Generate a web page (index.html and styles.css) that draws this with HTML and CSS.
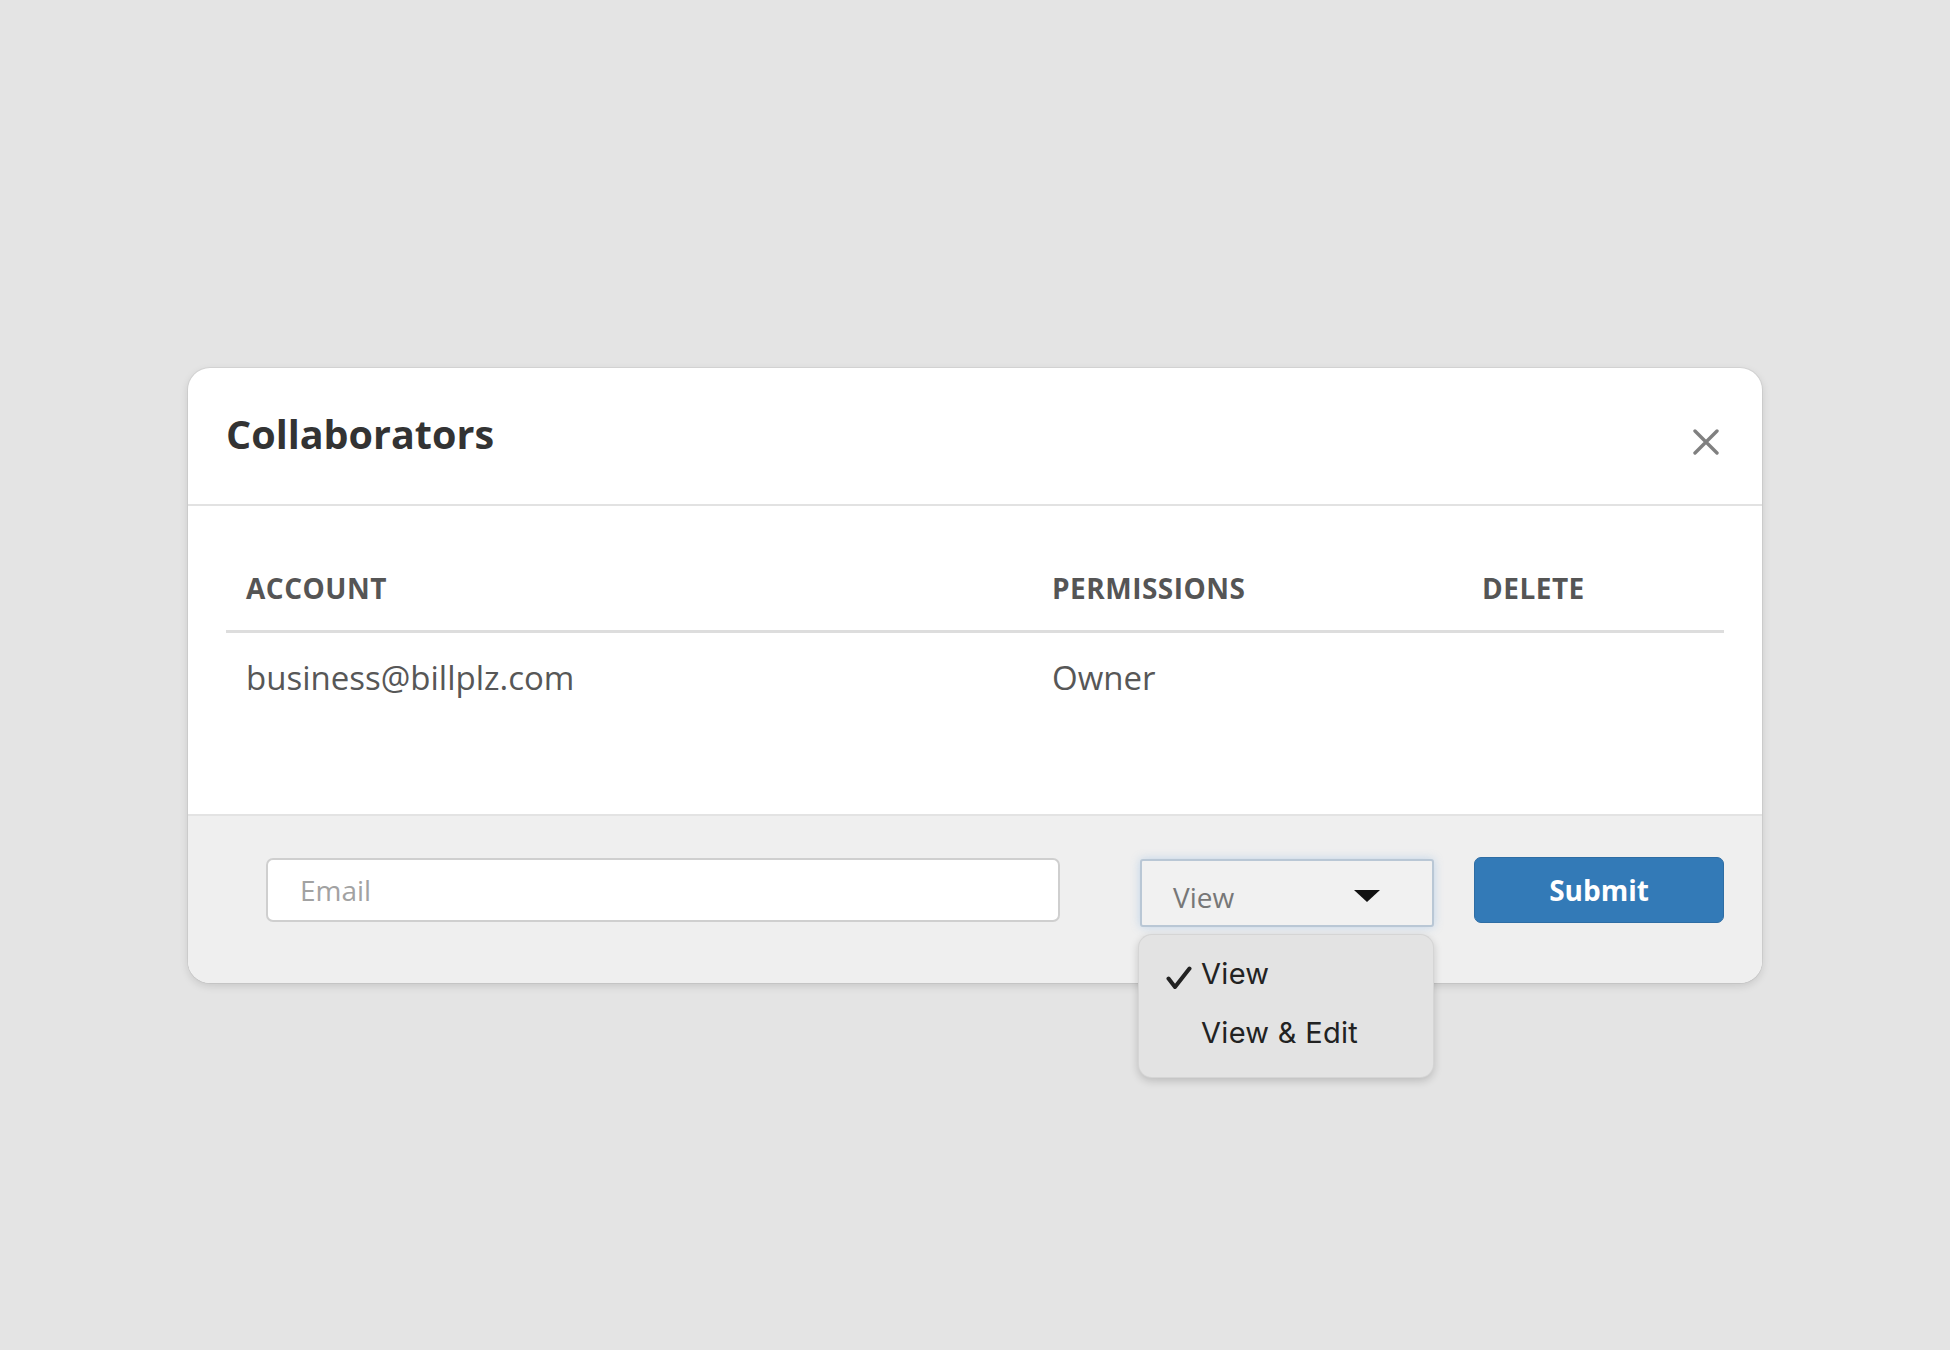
FILE: index.html
```html
<!DOCTYPE html>
<html lang="en">
<head>
<meta charset="utf-8">
<title>Collaborators</title>
<link rel="stylesheet" href="styles.css">
</head>
<body>
<div class="page">
  <div class="modal">
    <header class="modal-header">
      <h1 class="modal-title">Collaborators</h1>
      <button class="close-btn" type="button" aria-label="Close">
        <svg width="26" height="26" viewBox="0 0 26 26"><path d="M2 2 L24 24 M24 2 L2 24" stroke="#808080" stroke-width="3.4" stroke-linecap="round" fill="none"/></svg>
      </button>
    </header>
    <section class="modal-body">
      <table class="collab-table">
        <colgroup><col class="col-account"><col class="col-perm"><col class="col-del"></colgroup>
        <thead>
          <tr><th>Account</th><th>Permissions</th><th>Delete</th></tr>
        </thead>
        <tbody>
          <tr><td>business@billplz.com</td><td>Owner</td><td></td></tr>
        </tbody>
      </table>
    </section>
    <footer class="modal-footer">
      <input class="email-input" type="text" placeholder="Email">
      <div class="select-wrap">
        <div class="select-box">
          <span class="select-value">View</span>
          <span class="select-arrow"></span>
        </div>
        <ul class="select-menu">
          <li class="menu-item is-selected">
            <svg class="check" width="26" height="24" viewBox="0 0 26 24"><path d="M2.5 12.5 L9 21 L23.5 2.5" stroke="#222" stroke-width="4" stroke-linejoin="round" stroke-linecap="round" fill="none"/></svg>
            View
          </li>
          <li class="menu-item">View &amp; Edit</li>
        </ul>
      </div>
      <button class="submit-btn" type="button">Submit</button>
    </footer>
  </div>
</div>
</body>
</html>
```

FILE: styles.css
```css
* { box-sizing: border-box; }

html, body {
  margin: 0;
  padding: 0;
}

body {
  background: #e4e4e4;
  font-family: "Open Sans", "Noto Sans", sans-serif;
}

.page {
  height: 100vh;
  display: flex;
  align-items: center;
  justify-content: center;
}

.modal {
  width: 1574px;
  height: 615px;
  background: #ffffff;
  border-radius: 22px;
  box-shadow: 0 0 0 1px rgba(0, 0, 0, 0.05), 0 3px 8px rgba(0, 0, 0, 0.13);
  display: flex;
  flex-direction: column;
}

.modal-header {
  height: 138px;
  flex: 0 0 138px;
  border-bottom: 2px solid #e2e2e2;
  display: flex;
  justify-content: space-between;
  align-items: flex-start;
  padding: 39px 43px 0 38px;
}

.modal-title {
  margin: 0;
  font-size: 39.5px;
  line-height: 54px;
  font-weight: 700;
  color: #333333;
}

.close-btn {
  margin-top: 22px;
  padding: 0;
  border: 0;
  background: none;
  width: 26px;
  height: 26px;
  display: block;
}

.close-btn svg { display: block; }

.modal-body {
  flex: 0 0 308px;
  padding: 63px 38px 0;
}

.collab-table {
  width: 1498px;
  border-collapse: collapse;
  table-layout: fixed;
}

.col-account { width: 806px; }
.col-perm { width: 430px; }
.col-del { width: 262px; }

.collab-table th {
  text-align: left;
  text-transform: uppercase;
  font-size: 28px;
  line-height: 38px;
  font-weight: 700;
  letter-spacing: 0.5px;
  color: #555555;
  padding: 0 20px 23px;
  border-bottom: 3px solid #dddddd;
}

.collab-table td {
  font-size: 33px;
  line-height: 44px;
  font-weight: 400;
  color: #575757;
  padding: 23px 20px 0;
}

.modal-footer {
  flex: 1 1 auto;
  background: #efefef;
  border-top: 2px solid #e3e3e3;
  border-radius: 0 0 22px 22px;
  display: flex;
  align-items: flex-start;
  padding: 41px 38px 0 78px;
}

.email-input {
  flex: 0 0 794px;
  height: 64px;
  margin-top: 1px;
  border: 2px solid #cfcfcf;
  border-radius: 7px;
  background: #ffffff;
  padding: 0 0 0 32px;
  font-family: "Open Sans", "Noto Sans", sans-serif;
  font-size: 28px;
  color: #555555;
  outline: none;
}

.email-input::placeholder { color: #a2a2a2; }

.select-wrap {
  position: relative;
  flex: 0 0 294px;
  margin-left: 80px;
  margin-top: 2px;
}

.select-box {
  height: 68px;
  border: 2px solid #b9c7d5;
  border-radius: 3px;
  background: #f1f1f1;
  box-shadow: 0 0 10px rgba(102, 160, 220, 0.35);
  display: flex;
  align-items: center;
  justify-content: space-between;
  padding: 8px 52px 0 31px;
}

.select-value {
  font-size: 28px;
  line-height: 38px;
  color: #777777;
}

.select-arrow {
  width: 0;
  height: 0;
  border-left: 13px solid transparent;
  border-right: 13px solid transparent;
  border-top: 12px solid #111111;
  margin-top: -2px;
}

.select-menu {
  position: absolute;
  left: -2px;
  top: 75px;
  width: 296px;
  height: 144px;
  margin: 0;
  padding: 9px 0 0 62px;
  list-style: none;
  background: #e3e3e3;
  border: 1px solid rgba(0, 0, 0, 0.06);
  border-radius: 14px;
  box-shadow: 0 3px 8px rgba(0, 0, 0, 0.18);
  z-index: 5;
}

.menu-item {
  position: relative;
  font-family: Inter, "Open Sans", sans-serif;
  font-size: 29px;
  line-height: 59px;
  letter-spacing: 0.3px;
  color: #222222;
}

.check {
  position: absolute;
  left: -35px;
  top: 22px;
}

.submit-btn {
  flex: 0 0 250px;
  height: 66px;
  margin-left: 40px;
  background: #337ab7;
  border: 1px solid #2e6da4;
  border-radius: 7px;
  color: #ffffff;
  font-family: "Open Sans", "Noto Sans", sans-serif;
  font-size: 28px;
  font-weight: 700;
  padding: 0;
}
```
